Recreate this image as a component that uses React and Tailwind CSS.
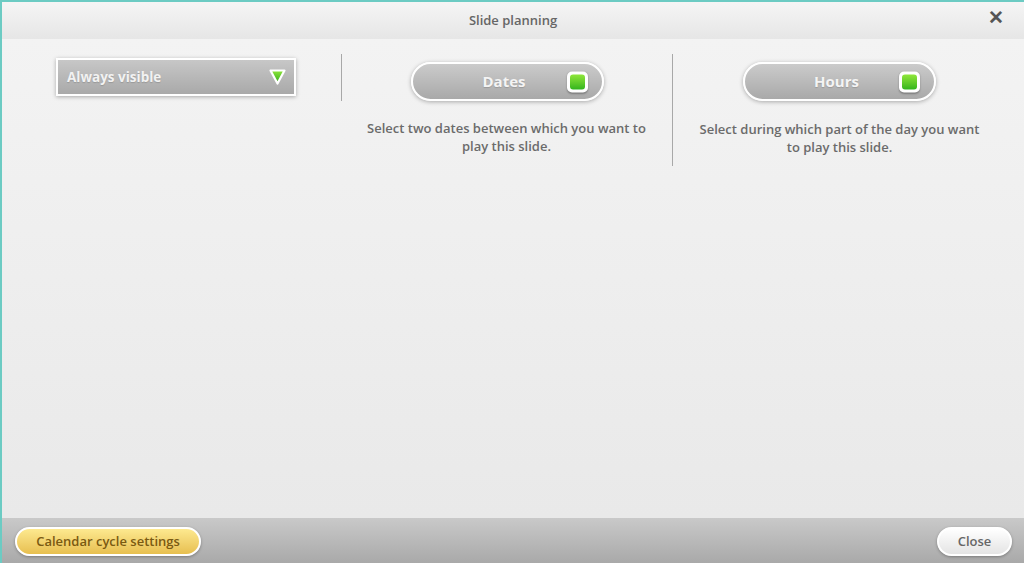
import React from 'react';

const font = { fontFamily: '"Open Sans", "Liberation Sans", sans-serif' };

function GreenBox() {
  return (
    <span className="absolute right-[14px] top-1/2 -translate-y-1/2 w-[21px] h-[21px] rounded-[5px] bg-white shadow-[0_1px_2px_rgba(0,0,0,0.3)] flex items-center justify-center">
      <span className="w-[15px] h-[15px] rounded-[3px] bg-gradient-to-b from-[#8ee63a] to-[#2fb51d]" />
    </span>
  );
}

function Toggle({ label }) {
  return (
    <button className="relative w-[193px] h-[39px] rounded-full border-2 border-white bg-gradient-to-b from-[#cbcbcb] to-[#a9a9a9] shadow-[0_1px_4px_rgba(0,0,0,0.3)] text-[15px] font-bold text-[#f4f4f4] [text-shadow:0_1px_1px_rgba(0,0,0,0.15)]">
      <span className="block -ml-[6px]">{label}</span>
      <GreenBox />
    </button>
  );
}

export default function App() {
  return (
    <div className="w-[1024px] h-[563px] flex flex-col border-t-2 border-l-2 border-[#6ccbc3] bg-[#f0f0f0] overflow-hidden" style={font}>
      {/* header */}
      <div className="relative h-[37px] shrink-0 flex items-center justify-center bg-gradient-to-b from-[#f5f5f5] to-[#e6e6e6]">
        <span className="text-[13px] font-semibold text-[#666]">Slide planning</span>
        <span className="absolute right-[20px] top-[6px] text-[19px] font-bold text-[#555] leading-none">✕</span>
      </div>

      {/* body */}
      <div className="flex-1 bg-gradient-to-b from-[#f3f3f3] to-[#e9e9e9] flex pt-[15px]">
        <div className="w-[339px] shrink-0 pl-[54px] pt-[4px]">
          <div className="relative w-[240px] h-[38px] border-2 border-white bg-gradient-to-b from-[#c7c7c7] to-[#a9a9a9] shadow-[0_1px_4px_rgba(0,0,0,0.3)] flex items-center pl-[9px]">
            <span className="text-[13.5px] font-bold text-[#f2f2f2] [text-shadow:0_1px_1px_rgba(0,0,0,0.15)]">Always visible</span>
            <svg className="absolute right-[7px] top-[8px]" width="19" height="18" viewBox="0 0 19 18">
              <defs>
                <linearGradient id="tri" x1="0" y1="0" x2="0" y2="1">
                  <stop offset="0" stopColor="#8ee63a" />
                  <stop offset="1" stopColor="#2fa81a" />
                </linearGradient>
              </defs>
              <path d="M2.5 2.5 L16.5 2.5 L9.5 15.5 Z" fill="url(#tri)" stroke="#fff" strokeWidth="2.2" strokeLinejoin="round" />
            </svg>
          </div>
        </div>

        <div className="w-[331px] shrink-0 flex flex-col items-center">
          <div className="self-stretch flex">
            <div className="w-px h-[47px] bg-[#a8a8a8]" />
            <div className="flex-1 flex justify-center pt-[8px]">
              <Toggle label="Dates" />
            </div>
          </div>
          <p className="mt-[18px] text-[13px] font-semibold text-[#6b6b6b] text-center leading-[18px] px-[16px]">
            Select two dates between which you want to play this slide.
          </p>
        </div>

        <div className="w-[334px] shrink-0 flex">
          <div className="w-px h-[112px] bg-[#a8a8a8]" />
          <div className="flex-1 flex flex-col items-center pt-[8px]">
            <Toggle label="Hours" />
            <p className="mt-[19px] text-[13px] font-semibold text-[#6b6b6b] text-center leading-[18px] px-[20px]">
              Select during which part of the day you want to play this slide.
            </p>
          </div>
        </div>
      </div>

      {/* footer */}
      <div className="h-[45px] shrink-0 bg-gradient-to-b from-[#c9c9c9] to-[#a9a9a9] flex items-center justify-between pl-[13px] pr-[12px] pt-[2px]">
        <button className="w-[186px] h-[29px] rounded-full border-2 border-white bg-gradient-to-b from-[#fde98f] to-[#e7bf4f] shadow-[0_1px_3px_rgba(0,0,0,0.3)] text-[13px] font-semibold text-[#7a5a12]">
          Calendar cycle settings
        </button>
        <button className="w-[75px] h-[29px] rounded-full border-2 border-white bg-gradient-to-b from-[#ffffff] to-[#e4e4e4] shadow-[0_1px_3px_rgba(0,0,0,0.3)] text-[13px] font-semibold text-[#666]">
          Close
        </button>
      </div>
    </div>
  );
}
